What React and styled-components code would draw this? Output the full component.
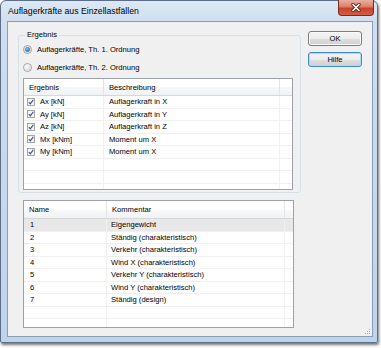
import React from 'react';
import styled, { createGlobalStyle } from 'styled-components';

const GlobalStyle = createGlobalStyle`
  html, body { margin: 0; padding: 0; background: #ffffff; }
  body { font-family: "Liberation Sans", Arial, sans-serif; color: #000; }
  #root { width: 381px; height: 348px; }
`;

const Window = styled.div`
  box-sizing: border-box;
  width: 378px;
  height: 343px;
  border: 1px solid #5d6f86;
  border-radius: 6px 6px 2px 2px;
  background: linear-gradient(180deg, #dde8f4 0px, #cfdef0 20px, #bfd3eb 100%);
  box-shadow: 1px 2px 3px rgba(0, 0, 0, 0.55);
  padding: 0 4px 5px 6px;
  display: flex;
  flex-direction: column;
`;

const TitleBar = styled.div`
  height: 20px;
  display: flex;
  align-items: flex-start;
  justify-content: space-between;
`;

const Title = styled.span`
  font-size: 8.7px;
  line-height: 21px;
  padding-left: 1px;
  color: #000;
`;

const CloseButton = styled.div`
  box-sizing: border-box;
  width: 36px;
  height: 16px;
  margin-top: -1px;
  margin-right: -1px;
  border: 1px solid #7a2b20;
  border-top: none;
  border-radius: 0 0 4px 4px;
  background: linear-gradient(180deg, #eab1a3 0%, #dd7d68 45%, #c7432b 55%, #d65d40 100%);
  display: flex;
  align-items: center;
  justify-content: center;
`;

const Client = styled.div`
  flex: 1;
  position: relative;
  background: #f0f0f0;
  border: 1px solid #8a9db5;
  display: flex;
  align-items: flex-start;
`;

const LeftColumn = styled.div`
  display: flex;
  flex-direction: column;
  padding: 8px 0 0 10px;
`;

const GroupBox = styled.fieldset`
  margin: 0;
  padding: 0 7px 2px 4px;
  width: 283px;
  min-width: 0;
  box-sizing: border-box;
  border: 1px solid #d5dfe5;
  border-radius: 3px;
  display: flex;
  flex-direction: column;
`;

const Legend = styled.legend`
  font-size: 7.6px;
  line-height: 10px;
  padding: 0 2px;
  margin-left: 2px;
`;

const RadioRow = styled.label`
  height: 18px;
  display: flex;
  align-items: center;
  gap: 5px;
  font-size: 7.6px;
`;

const ListView = styled.div`
  box-sizing: border-box;
  width: ${p => p.$w}px;
  height: ${p => p.$h}px;
  margin: ${p => p.$m};
  border: 1px solid #9da2aa;
  background: #ffffff;
  overflow: hidden;
`;

const HeaderRow = styled.div`
  display: grid;
  grid-template-columns: ${p => p.$cols};
  height: ${p => p.$h}px;
  box-sizing: border-box;
  border-bottom: 1px solid #d5d7da;
  background: linear-gradient(180deg, #ffffff 0%, #ffffff 50%, #f7f8f9 51%, #f1f2f4 100%);
`;

const HeaderCell = styled.div`
  display: flex;
  align-items: center;
  padding-left: 5px;
  font-size: 7.6px;
  border-right: 1px solid #e1e4e8;
  overflow: hidden;
  white-space: nowrap;
  &:last-child { border-right: none; }
`;

const Row = styled.div`
  display: grid;
  grid-template-columns: ${p => p.$cols};
  height: 12.5px;
  box-sizing: border-box;
  border-bottom: 1px solid #f0f0f0;
  background: ${p => (p.$selected ? '#e8e8e8' : 'transparent')};
`;

const Cell = styled.div`
  display: flex;
  align-items: center;
  gap: 5px;
  padding-left: ${p => p.$pad ?? 5}px;
  font-size: 7.6px;
  white-space: nowrap;
  overflow: hidden;
  border-right: 1px solid #f0f0f0;
  &:last-child { border-right: none; }
`;

const ButtonColumn = styled.div`
  display: flex;
  flex-direction: column;
  gap: 6px;
  padding-top: 9px;
  margin-left: 7px;
`;

const Button = styled.button`
  box-sizing: border-box;
  width: 54px;
  height: 15px;
  padding: 0;
  font-family: "Liberation Sans", Arial, sans-serif;
  font-size: 7.6px;
  color: #000;
  border-radius: 3px;
  border: 1px solid ${p => (p.$focused ? '#3c8ccf' : '#7d7d7d')};
  background: linear-gradient(180deg, #f4f4f4 0%, #ececec 50%, #dedede 51%, #d1d1d1 100%);
  box-shadow: inset 0 0 0 1px ${p => (p.$focused ? '#a9dcf6' : '#fbfbfb')};
`;

const Grip = styled.svg`
  position: absolute;
  right: 1px;
  bottom: 1px;
`;

function RadioIcon({ checked }) {
  return (
    <svg width="9" height="9" viewBox="0 0 9 9">
      <defs>
        <radialGradient id={checked ? 'rdOn' : 'rdOff'} cx="0.4" cy="0.35" r="0.7">
          <stop offset="0" stopColor={checked ? '#8fd0f5' : '#ffffff'} />
          <stop offset="1" stopColor={checked ? '#1a5fa8' : '#d8d8d8'} />
        </radialGradient>
      </defs>
      <circle cx="4.5" cy="4.5" r="4" fill="#f2f2f2" stroke="#8c8f94" strokeWidth="0.8" />
      {checked ? (
        <circle cx="4.5" cy="4.5" r="2.3" fill="url(#rdOn)" stroke="#2b5f97" strokeWidth="0.4" />
      ) : (
        <circle cx="4.5" cy="4.5" r="3.2" fill="url(#rdOff)" />
      )}
    </svg>
  );
}

function CheckIcon() {
  return (
    <svg width="8" height="8" viewBox="0 0 8 8">
      <rect x="0.5" y="0.5" width="7" height="7" fill="#f6f6f6" stroke="#8e8f8f" strokeWidth="0.8" />
      <path d="M1.8 4.2 L3.3 5.8 L6.3 1.8" fill="none" stroke="#3a4f86" strokeWidth="1.1" />
    </svg>
  );
}

const results = [
  ['Ax [kN]', 'Auflagerkraft in X'],
  ['Ay [kN]', 'Auflagerkraft in Y'],
  ['Az [kN]', 'Auflagerkraft in Z'],
  ['Mx [kNm]', 'Moment um X'],
  ['My [kNm]', 'Moment um X'],
];

const cases = [
  ['1', 'Eigengewicht'],
  ['2', 'Ständig (charakteristisch)'],
  ['3', 'Verkehr (charakteristisch)'],
  ['4', 'Wind X (charakteristisch)'],
  ['5', 'Verkehr Y (charakteristisch)'],
  ['6', 'Wind Y (charakteristisch)'],
  ['7', 'Ständig (design)'],
];

const cols1 = '80px 176px 1fr';
const cols2 = '83px 178px 1fr';

export default function App() {
  return (
    <>
      <GlobalStyle />
      <Window>
        <TitleBar>
          <Title>Auflagerkräfte aus Einzellastfällen</Title>
          <CloseButton>
            <svg width="10" height="9" viewBox="0 0 10 9">
              <path d="M2 1.5 L8 7.5 M8 1.5 L2 7.5" stroke="#5a1e16" strokeWidth="3.2" strokeLinecap="round" />
              <path d="M2 1.5 L8 7.5 M8 1.5 L2 7.5" stroke="#ffffff" strokeWidth="1.7" strokeLinecap="round" />
            </svg>
          </CloseButton>
        </TitleBar>
        <Client>
          <LeftColumn>
            <GroupBox>
              <Legend>Ergebnis</Legend>
              <RadioRow>
                <RadioIcon checked />
                Auflagerkräfte, Th. 1. Ordnung
              </RadioRow>
              <RadioRow>
                <RadioIcon />
                Auflagerkräfte, Th. 2. Ordnung
              </RadioRow>
              <ListView $w={270} $h={112} $m="2px 0 0 0">
                <HeaderRow $cols={cols1} $h={17}>
                  <HeaderCell>Ergebnis</HeaderCell>
                  <HeaderCell>Beschreibung</HeaderCell>
                  <HeaderCell />
                </HeaderRow>
                {results.map(([a, b]) => (
                  <Row key={a} $cols={cols1}>
                    <Cell $pad={3}>
                      <CheckIcon />
                      {a}
                    </Cell>
                    <Cell>{b}</Cell>
                    <Cell />
                  </Row>
                ))}
                {[0, 1, 2].map(i => (
                  <Row key={'e' + i} $cols={cols1}>
                    <Cell />
                    <Cell />
                    <Cell />
                  </Row>
                ))}
              </ListView>
            </GroupBox>
            <ListView $w={271} $h={128} $m="7px 0 0 5px">
              <HeaderRow $cols={cols2} $h={18}>
                <HeaderCell>Name</HeaderCell>
                <HeaderCell>Kommentar</HeaderCell>
                <HeaderCell />
              </HeaderRow>
              {cases.map(([n, k], i) => (
                <Row key={n} $cols={cols2} $selected={i === 0}>
                  <Cell $pad={6}>{n}</Cell>
                  <Cell $pad={4}>{k}</Cell>
                  <Cell />
                </Row>
              ))}
              {[0, 1, 2].map(i => (
                <Row key={'f' + i} $cols={cols2}>
                  <Cell />
                  <Cell />
                  <Cell />
                </Row>
              ))}
            </ListView>
          </LeftColumn>
          <ButtonColumn>
            <Button>OK</Button>
            <Button $focused>Hilfe</Button>
          </ButtonColumn>
          <Grip width="8" height="8" viewBox="0 0 8 8">
            {[[6, 2], [6, 4], [4, 4], [6, 6], [4, 6], [2, 6]].map(([x, y]) => (
              <rect key={x + '-' + y} x={x} y={y} width="1" height="1" fill="#a8a8a8" />
            ))}
          </Grip>
        </Client>
      </Window>
    </>
  );
}
